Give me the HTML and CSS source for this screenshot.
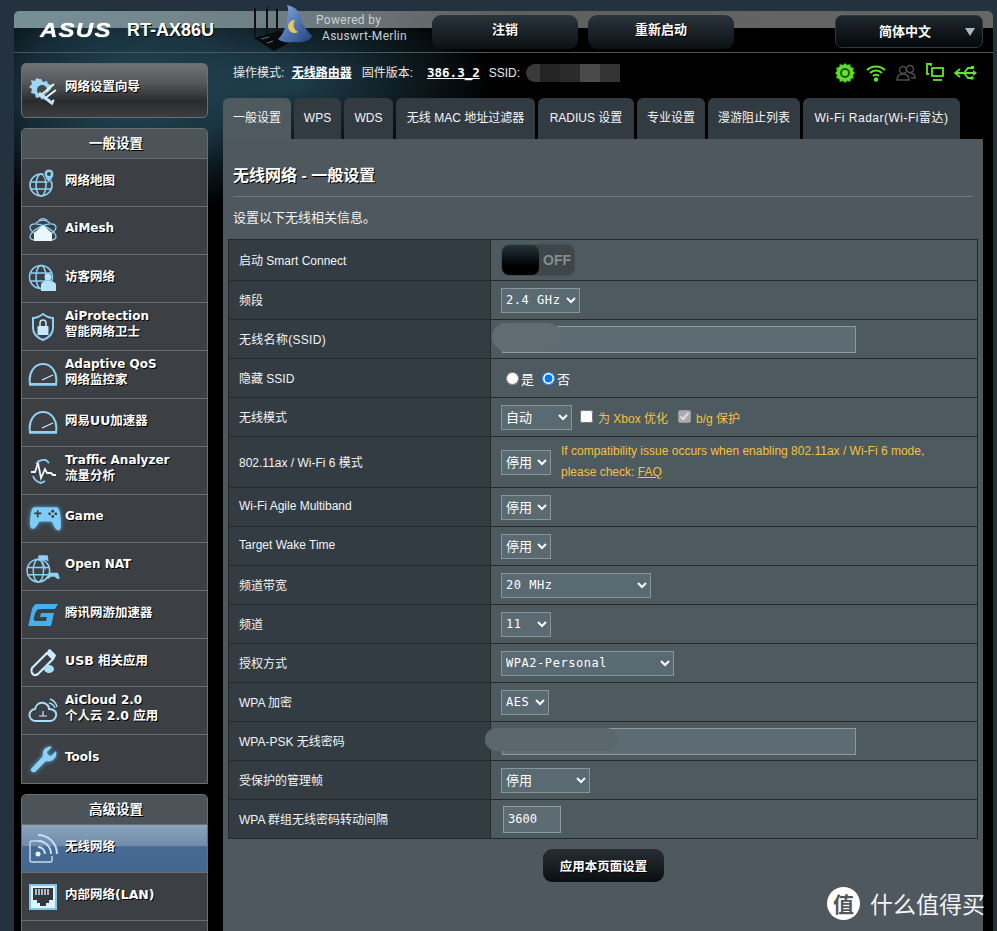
FILE: index.html
```html
<!DOCTYPE html>
<html lang="zh-CN">
<head>
<meta charset="utf-8">
<title>RT-AX86U</title>
<link rel="stylesheet" href="styles.css">
</head>
<body>
<div class="window">
  <svg class="router-logo" width="64" height="46" viewBox="0 0 64 46">
    <defs>
      <linearGradient id="hat" x1="0" y1="0" x2="1" y2="1"><stop offset="0" stop-color="#8aaee0"/><stop offset="1" stop-color="#1f3f7f"/></linearGradient>
    </defs>
    <path d="M2 3v29M14 2v28M24 3v24" stroke="#111" stroke-width="2"/>
    <path d="M1 33l25-7 17 8-22 12z" fill="#0a0a0a"/>
    <path d="M8 34l8-2M14 38l6-2" stroke="#3a7fa8" stroke-width="1"/>
    <path d="M25 34C30 30 33 22 34 14 35 9 36 5 34 0 44 2 47 8 48 14 50 20 54 26 59 31 58 36 48 38 42 37 34 38 28 37 25 34z" fill="url(#hat)"/>
    <path d="M42 15a6.500 6.500 0 1 0 3 12 8 8 0 0 1-3-12z" fill="#e9c75a"/>
  </svg>
  <header class="topbar">
    <div class="brand">
      <span class="asus">ASUS</span>
      <span class="model">RT-AX86U</span>
    </div>
    <div class="powered"><span>Powered by</span><span class="powered-2">Asuswrt-Merlin</span></div>
    <button class="top-btn">注销</button>
    <button class="top-btn">重新启动</button>
    <div class="lang">简体中文<i class="lang-arrow"></i></div>
  </header>

  <div class="shell">
    <aside class="sidebar">
      <a class="wizard">
        <svg class="ico" viewBox="0 0 30 30"><path d="M13 3l2 3 4-1 1 3 4 1-1 4-6 6-3 5-2-3-4 1-1-4-4-1 1-4-3-2 3-3-1-4 4 1 1-3 3 1z" fill="#9fd6f5"/><circle cx="14" cy="14" r="5" fill="#47494b"/><path d="M12 20L26 8M16 23L28 14M24 26l2-2" stroke="#e8f4fb" stroke-width="2" fill="none"/><path d="M11 17l14 11" stroke="#bfe4f8" stroke-width="3"/></svg>
        <span class="label-wiz">网络设置向导</span>
      </a>
      <nav class="group">
        <div class="group-title">一般设置</div>
        <a class="item"><svg class="ico" viewBox="0 0 30 30"><g fill="none" stroke="#8fd0f5" stroke-width="1.6"><circle cx="13" cy="17" r="11"/><ellipse cx="13" cy="17" rx="5" ry="11"/><path d="M2 14h22M2 21h22"/></g><path d="M21 1a5 5 0 0 1 5 5c0 3-5 9-5 9s-5-6-5-9a5 5 0 0 1 5-5z" fill="#8fd0f5" stroke="#3c4044"/><circle cx="21" cy="6" r="2" fill="#3c4044"/></svg><span class="label">网络地图</span></a>
        <a class="item"><svg class="ico" viewBox="0 0 30 30"><g fill="none" stroke="#8fd0f5" stroke-width="1.3"><ellipse cx="15" cy="16" rx="14" ry="6" transform="rotate(25 15 16)"/><ellipse cx="15" cy="16" rx="14" ry="6" transform="rotate(-25 15 16)"/><path d="M8 7a10 10 0 0 1 14 0M11 4a7 7 0 0 1 8 0"/></g><path d="M15 9l9 8v8H6v-8z" fill="#e8f6fd"/></svg><span class="label en">AiMesh</span></a>
        <a class="item"><svg class="ico" viewBox="0 0 30 30"><g fill="none" stroke="#8fd0f5" stroke-width="1.5"><circle cx="13" cy="13" r="11.5"/><ellipse cx="13" cy="13" rx="5" ry="11.5"/><path d="M2 9h22M2 17h22"/></g><circle cx="20" cy="13" r="3.5" fill="#b8e4fb"/><path d="M13 27v-6c0-3 3-4 7-4s8 1 8 4v6z" fill="#b8e4fb"/></svg><span class="label">访客网络</span></a>
        <a class="item"><svg class="ico" viewBox="0 0 30 30"><path d="M15 2c4 3 7 4 10 4v10c0 6-5 10-10 12C10 26 5 22 5 16V6c3 0 6-1 10-4z" fill="none" stroke="#8fd0f5" stroke-width="2"/><rect x="9.500" y="14" width="11" height="9" rx="1" fill="#c5eafc"/><path d="M12 14v-3a3 3 0 0 1 6 0v3" fill="none" stroke="#c5eafc" stroke-width="1.500"/></svg><span class="two"><b class="en">AiProtection</b><b>智能网络卫士</b></span></a>
        <a class="item"><svg class="ico" viewBox="0 0 30 30"><path d="M2 24C0 12 7 4 15 4s15 8 13 20z" fill="none" stroke="#8fd0f5" stroke-width="2"/><path d="M14 20l11-5" stroke="#cfeefd" stroke-width="1.300"/><path d="M1 25h28" stroke="#8fd0f5" stroke-width="1.500"/></svg><span class="two"><b class="en">Adaptive QoS</b><b>网络监控家</b></span></a>
        <a class="item"><svg class="ico" viewBox="0 0 30 30"><path d="M2 24C0 12 7 4 15 4s15 8 13 20z" fill="none" stroke="#8fd0f5" stroke-width="2"/><path d="M14 20l11-5" stroke="#cfeefd" stroke-width="1.300"/><path d="M1 25h28" stroke="#8fd0f5" stroke-width="1.500"/></svg><span class="label">网易UU加速器</span></a>
        <a class="item"><svg class="ico" viewBox="0 0 30 30"><path d="M3 16h4l3-9 3 15 4-9 2 4h4l2 2h3" fill="none" stroke="#eaf7fd" stroke-width="1.800"/><path d="M8 8a11 11 0 0 1 10-4l3 3M5 20a11 11 0 0 0 8 7l4-2" fill="none" stroke="#8fd0f5" stroke-width="1.800"/></svg><span class="two"><b class="en">Traffic Analyzer</b><b>流量分析</b></span></a>
        <a class="item"><svg class="ico ico-game" viewBox="0 0 32 30"><path d="M5 4h22c3 0 4 10 4 17s-3 7-6 3l-3-6H10l-3 5c-3 3-6 3-6-3S2 4 5 4z" fill="#7fcdf7"/><path d="M5 10h7M8.500 7v7" stroke="#3c4044" stroke-width="1.600"/><circle cx="23" cy="8" r="1.400" fill="#3c4044"/><circle cx="23" cy="13" r="1.400" fill="#3c4044"/><circle cx="20" cy="10.500" r="1.400" fill="#3c4044"/><circle cx="26" cy="10.500" r="1.400" fill="#3c4044"/></svg><span class="label en">Game</span></a>
        <a class="item"><svg class="ico ico-lg" viewBox="0 0 34 34"><g fill="none" stroke="#8fd0f5" stroke-width="1.400"><circle cx="12" cy="21" r="11"/><ellipse cx="12" cy="21" rx="5" ry="11"/><path d="M1 18h22M1 25h22"/></g><path d="M12 6h9l1 6-3-1h-4l-3 1zM23 23h8l2 6-3 0-2-2h-4l-2 2h-3z" fill="#8fd0f5"/><path d="M16 12l3 8" stroke="#8fd0f5"/></svg><span class="label en">Open NAT</span></a>
        <a class="item"><svg class="ico" viewBox="0 0 30 30"><path d="M9 4h21l-3 5H12c-3 0-4 2-5 5l-1 3c-1 3 0 4 3 4h9l1-4h-7l1-4h13l-3 13H1c-1 0-1-1 0-3L4 9c1-3 3-5 5-5z" fill="#45b0f0"/></svg><span class="label">腾讯网游加速器</span></a>
        <a class="item"><svg class="ico" viewBox="0 0 30 30"><path d="M4 20L19 5l6 6-15 15c-3 2-5 1-6-1s-1-3 0-5z" fill="none" stroke="#cdeefd" stroke-width="2.200"/><path d="M20 2l2-1 6 6-1 3-2 1-6-6z" fill="#cdeefd"/><ellipse cx="21" cy="21" rx="5" ry="4" fill="#a8def8"/></svg><span class="label">USB 相关应用</span></a>
        <a class="item"><svg class="ico" viewBox="0 0 30 30"><path d="M8 25a6 6 0 0 1-1-12c1-5 5-7 9-6 3 1 5 3 5 6 5 0 8 3 7 7-1 3-3 5-6 5z" fill="none" stroke="#a8def8" stroke-width="2"/><path d="M11 20h8M15 15v5" stroke="#c9ecfd" stroke-width="1.200"/><path d="M21 7a8 8 0 0 1 6 5M22 3a11 11 0 0 1 7 8" fill="none" stroke="#a8def8" stroke-width="1.400"/></svg><span class="two"><b class="en">AiCloud 2.0</b><b>个人云 2.0 应用</b></span></a>
        <a class="item"><svg class="ico ico-glow" viewBox="0 0 30 30"><path d="M3 25L15 12c-1-4 1-8 5-9 2-1 3 0 4 0l-5 5 1 3 3 1 5-5c1 3 0 6-2 8-2 2-5 3-8 2L7 28c-2 1-5-1-4-3z" fill="#8fd0f5"/></svg><span class="label en">Tools</span></a>
      </nav>
      <nav class="group">
        <div class="group-title">高级设置</div>
        <a class="item item-on"><svg class="ico" viewBox="0 0 30 30"><path d="M14 7H4a2 2 0 0 0-2 2v17a2 2 0 0 0 2 2h18a2 2 0 0 0 2-2v-4" fill="none" stroke="#c3dcf2" stroke-width="1.400"/><circle cx="10" cy="20" r="2.500" fill="#eaf4fc"/><g fill="none" stroke="#c3dcf2" stroke-width="2"><path d="M10 13a7 7 0 0 1 7 7"/><path d="M10 7a13 13 0 0 1 13 13"/><path d="M10 1a19 19 0 0 1 19 19"/></g></svg><span class="label">无线网络</span></a>
        <a class="item"><svg class="ico" viewBox="0 0 30 30"><rect x="2" y="3" width="26" height="24" fill="#dff3fd" stroke="#7fc6ee" stroke-width="2"/><path d="M5 6h20v12h-4v3h-3v3h-6v-3H9v-3H5z" fill="#33383c"/><path d="M8 7v6M11 7v6M14 7v6M17 7v6M20 7v6" stroke="#dff3fd" stroke-width="1.400"/></svg><span class="label">内部网络(LAN)</span></a>
        <a class="item"></a>
      </nav>
    </aside>

    <main class="main">
      <div class="status">
        <span class="status-text">操作模式: <u class="status-link">无线路由器</u></span>
        <span class="status-text">固件版本:</span>
        <u class="fw">386.3_2</u>
        <span class="status-text ssid-text">SSID:</span>
        <span class="blur-ssid"><i></i><i></i><i></i><i></i><i></i></span>
        <span class="status-icons">
          <svg width="22" height="22" viewBox="0 0 22 22"><path d="M11 1l2 2 3-1 1 3 3 1-1 3 2 2-2 2 1 3-3 1-1 3-3-1-2 2-2-2-3 1-1-3-3-1 1-3-2-2 2-2-1-3 3-1 1-3 3 1z" fill="#5fdc2c" stroke="#215a12"/><circle cx="11" cy="11" r="5" fill="#1f5a12"/><circle cx="11" cy="11" r="3" fill="#63e230"/></svg>
          <svg width="20" height="18" viewBox="0 0 20 18"><g fill="none" stroke="#63e230" stroke-width="2"><path d="M1 6a13 13 0 0 1 18 0"/><path d="M4 9a8.500 8.500 0 0 1 12 0"/><path d="M7 12a4 4 0 0 1 6 0"/></g><circle cx="10" cy="15.500" r="2.200" fill="#63e230"/></svg>
          <svg width="20" height="18" viewBox="0 0 20 18"><g fill="none" stroke="#4f4f4f" stroke-width="1.500"><circle cx="7" cy="6" r="3.500"/><circle cx="14" cy="5" r="3.500"/><path d="M1 16c0-4 2-6 6-6s6 2 6 6zM14 9c3 0 5 2 5 5h-4"/></g></svg>
          <svg width="18" height="19" viewBox="0 0 18 19"><g fill="none" stroke="#63e230" stroke-width="1.800"><path d="M5 3V1h-4v10h2"/><rect x="6" y="5" width="11" height="8"/><path d="M7 17h9"/></g></svg>
          <svg width="23" height="14" viewBox="0 0 23 14"><path d="M1 7h20M6 3L1 7l5 4M10 7l4-5h3M10 7l4 5h3" fill="none" stroke="#63e230" stroke-width="1.800"/><rect x="17" y="0" width="3" height="3" fill="#63e230"/><circle cx="18" cy="12" r="1.800" fill="#63e230"/><path d="M19 4l4 3-4 3z" fill="#63e230"/></svg>
        </span>
      </div>
      <div class="tabs">
        <a class="tab tab-on">一般设置</a>
        <a class="tab">WPS</a>
        <a class="tab">WDS</a>
        <a class="tab">无线 MAC 地址过滤器</a>
        <a class="tab">RADIUS 设置</a>
        <a class="tab">专业设置</a>
        <a class="tab">漫游阻止列表</a>
        <a class="tab tab-wide">Wi-Fi Radar(Wi-Fi雷达)</a>
      </div>
      <section class="panel">
        <h1 class="panel-title">无线网络 - 一般设置</h1>
        <p class="panel-desc">设置以下无线相关信息。</p>
        <table class="form">
          <tr class="r41"><th>启动 Smart Connect</th><td>
            <span class="switch"><span class="knob"></span><span class="off">OFF</span></span>
          </td></tr>
          <tr><th>频段</th><td><select class="sel mono w79"><option>2.4 GHz</option></select></td></tr>
          <tr><th class="wide">无线名称(SSID)</th><td class="blur-host"><input class="txt w354" type="text"><span class="blur blur-a"></span></td></tr>
          <tr><th>隐藏 SSID</th><td><label class="radio"><input type="radio" name="h">是</label><label class="radio"><input type="radio" name="h" checked>否</label></td></tr>
          <tr><th>无线模式</th><td class="mode-cell"><select class="sel w71"><option>自动</option></select><label class="chk"><input type="checkbox">为 Xbox 优化</label><label class="chk"><input type="checkbox" checked disabled>b/g 保护</label></td></tr>
          <tr class="r51"><th>802.11ax / Wi-Fi 6 模式</th><td class="note-cell"><select class="sel w50"><option>停用</option></select><span class="note">If compatibility issue occurs when enabling 802.11ax / Wi-Fi 6 mode,<br>please check: <u>FAQ</u></span></td></tr>
          <tr><th>Wi-Fi Agile Multiband</th><td><select class="sel w50"><option>停用</option></select></td></tr>
          <tr><th>Target Wake Time</th><td><select class="sel w50"><option>停用</option></select></td></tr>
          <tr><th>频道带宽</th><td><select class="sel mono w150"><option>20 MHz</option></select></td></tr>
          <tr><th>频道</th><td><select class="sel mono w50"><option>11</option></select></td></tr>
          <tr><th>授权方式</th><td><select class="sel mono w173"><option>WPA2-Personal</option></select></td></tr>
          <tr><th>WPA 加密</th><td><select class="sel mono w48"><option>AES</option></select></td></tr>
          <tr><th>WPA-PSK 无线密码</th><td class="blur-host"><input class="txt w354" type="text"><span class="blur blur-b"></span></td></tr>
          <tr><th>受保护的管理帧</th><td><select class="sel w89"><option>停用</option></select></td></tr>
          <tr><th>WPA 群组无线密码转动间隔</th><td><input class="txt w58 mono" type="text" value="3600"></td></tr>
        </table>
        <div class="apply-row"><button class="apply">应用本页面设置</button></div>
      </section>
    </main>
  </div>
</div>
<div class="watermark"><span class="wm-badge">值</span><span class="wm-text">什么值得买</span></div>
</body>
</html>
```
FILE: styles.css
```css
* { box-sizing: border-box; }
html, body { margin: 0; height: 931px; overflow: hidden; }
body {
  background: #24323f;
  font-family: "Liberation Sans", "Noto Sans CJK SC", sans-serif;
  font-size: 12px;
  color: #fff;
}
.window {
  position: relative;
  margin: 11px 4px 0 14px;
  height: 920px;
  border-radius: 5px 5px 0 0;
  background:
    radial-gradient(ellipse 190px 130px at 110px 80px, #24485a 0%, rgba(36,72,90,.6) 55%, rgba(36,72,90,0) 100%),
    radial-gradient(ellipse 200px 90px at 280px 70px, #1f3e4c 0%, rgba(31,62,76,0) 100%),
    #000;
}
.router-logo { position: absolute; left: 239px; top: -6px; }

/* top bar */
.topbar {
  height: 42px;
  display: flex;
  align-items: flex-start;
  padding-top: 4px;
  border-bottom: 1px solid #4c5660;
  background: linear-gradient(90deg, rgba(124,150,156,.95) 0, rgba(120,135,140,.9) 30%, #5f5f5f 50%, #666 100%) top / 100% 17px no-repeat;
  border-radius: 5px 5px 0 0;
}
.brand { width: 302px; display: flex; align-items: center; padding: 3px 0 0 26px; height: 26px; }
.asus {
  display: inline-block;
  width: 71px;
  font: italic bold 21px/20px "Liberation Sans", sans-serif;
  letter-spacing: 1px;
  transform: scaleX(1.15);
  transform-origin: left;
  text-shadow: 0 0 1px #fff;
}
.model {
  margin-left: 16px;
  font: bold 18px/20px "Liberation Sans", sans-serif;
  text-shadow: 1px 1px 0 #000;
}
.powered {
  width: 116px;
  display: flex;
  flex-direction: column;
  margin-top: -3px;
  font: 12px/16px Roboto, sans-serif;
  color: #c9cfd2;
  letter-spacing: .3px;
}
.powered-2 { margin-left: 6px; }
.top-btn {
  width: 146px;
  height: 34px;
  margin-right: 10px;
  border: 0;
  border-radius: 9px;
  background: linear-gradient(#2a353c, #0c1013);
  color: #fff;
  font: bold 13px/28px "Liberation Sans", "Noto Sans CJK SC", sans-serif;
  padding: 0 0 4px;
  text-shadow: 1px 1px 0 #000;
}
.lang {
  position: relative;
  margin-left: 91px;
  width: 148px;
  height: 33px;
  border: 1px solid #2f3a40;
  border-radius: 7px;
  background: linear-gradient(#1f292f, #04070a);
  font: bold 13px/31px "Liberation Sans", "Noto Sans CJK SC", sans-serif;
  text-align: center;
  padding-right: 8px;
}
.lang-arrow {
  position: absolute;
  right: 7px;
  top: 12px;
  border: 5.500px solid transparent;
  border-top: 8px solid #a9b8c9;
  border-bottom: 0;
}

/* layout */
.shell { display: flex; gap: 15px; padding-left: 7px; }
.sidebar { width: 187px; flex: none; padding-top: 10px; display: flex; flex-direction: column; gap: 10px; }
.main { width: 760px; flex: none; }

/* side */
.wizard {
  height: 55px;
  display: flex;
  align-items: center;
  border: 1px solid #6a6e71;
  border-radius: 5px;
  background: linear-gradient(#707375 0, #55585a 35%, #2a2b2c 70%, #3c3d3e 100%);
}
.group {
  border: 1px solid #6a6e71;
  border-radius: 5px 5px 0 0;
  background: #3c4044;
}
.group-title {
  height: 30px;
  padding-left: 3px;
  background: #4c5459;
  border-bottom: 1px solid #6a6e71;
  border-radius: 4px 4px 0 0;
  text-align: center;
  font: bold 13.500px/30px "Liberation Sans", "Noto Sans CJK SC", sans-serif;
  text-shadow: 1px 1px 0 #000;
}
.item {
  height: 48px;
  display: flex;
  align-items: center;
  border-bottom: 1px solid #6a6e71;
}
.item:last-child { border-bottom: 0; }
.label, .label-wiz, .two {
  font: bold 12.500px/15px "DejaVu Sans", "Noto Sans CJK SC", sans-serif;
  text-shadow: 1px 1px 0 #000;
}
.label { margin-bottom: 4px; }
.label-wiz { margin-bottom: 8px; }
.two { display: flex; flex-direction: column; margin-bottom: 6px; }
.two b { font-weight: bold; }
.en { font-size: 12px; }
.ico { width: 30px; height: 30px; flex: none; margin: 0 7px 0 6px; }
.ico-lg { width: 35px; height: 35px; margin: 0 4px; }
.ico-game { width: 33px; height: 31px; margin: 0 3px 0 7px; filter: drop-shadow(0 0 2px #4fa8dc); }
.ico-glow { filter: drop-shadow(0 0 2px #4fa8dc); }
.item-on { background: linear-gradient(#8ba4bd 0, #6f8cab 44%, #476a94 46%, #44678f 100%); }

/* status */
.status { height: 45px; padding: 11px 0 0 10px; display: flex; align-items: flex-start; position: relative; }
.status-text { font-size: 12px; line-height: 18px; color: #e8e8e8; margin-right: 10px; }
.status-link { color: #fff; font-weight: bold; margin-left: 4px; }
.fw { font: bold 12.500px/18px "DejaVu Sans Mono", monospace; margin: 0 9px 0 4px; }
.ssid-text { margin-right: 6px; }
.blur-ssid { display: flex; height: 18px; }
.blur-ssid i { width: 20px; background: #2b2b2b; }
.blur-ssid i:first-child { width: 14px; border-radius: 9px 0 0 9px; background: #3a3a3a; }
.blur-ssid i:nth-child(2) { background: #242424; }
.blur-ssid i:nth-child(4) { background: #4a4a4a; }
.blur-ssid i:nth-child(5) { background: #333; }
.status-icons {
  position: absolute;
  left: 611px;
  top: 0;
  height: 35px;
  display: flex;
  align-items: center;
  gap: 10px;
  padding-top: 4px;
}

/* tabs */
.tabs {
  display: grid;
  grid-template-columns: 68px 47px 49px 139px 96px 68px 92px 157px;
  gap: 3px;
  height: 41px;
}
.tab {
  background: #333b42;
  border-radius: 6px 6px 0 0;
  font-size: 12px;
  line-height: 41px;
  text-align: center;
  color: #f4f6f8;
}
.tab-on { background: #4e5a60; }
.tab-wide { letter-spacing: .5px; }

/* panel */
.panel { height: 800px; background: #4e585e; padding-top: 24px; }
.panel-title {
  margin: 0 10px;
  height: 34px;
  font: bold 16px/26px "Liberation Sans", "Noto Sans CJK SC", sans-serif;
  border-bottom: 1px solid #6f7a80;
  text-shadow: 1px 1px 0 #000;
}
.panel-desc { margin: 0 10px; height: 42px; font-size: 13px; line-height: 42px; color: #f2f2f2; }

/* table */
.form { margin-left: 5px; width: 750px; border-collapse: collapse; table-layout: fixed; background: #4d5a60; }
.form th, .form td { border: 1px solid #24292d; height: 39px; padding: 0; vertical-align: middle; }
.form th {
  width: 262px;
  padding: 0 0 2px 10px;
  background: #333c43;
  font-weight: normal;
  font-size: 12px;
  text-align: left;
  color: #f2f4f6;
}
.form th.wide { letter-spacing: .3px; }
.form td { padding-left: 10px; }
.form .r41 th, .form .r41 td { height: 41px; }
.form .r51 th, .form .r51 td { height: 51px; }

.sel {
  height: 25px;
  background: #596a72;
  color: #fff;
  border: 1px solid #8a949a;
  border-radius: 0;
  padding: 0;
  font: 13px "Liberation Sans", "Noto Sans CJK SC", sans-serif;
  vertical-align: middle;
}
.mono { font-family: "DejaVu Sans Mono", "Liberation Mono", monospace; font-size: 12px; }
.sel.mono { letter-spacing: .55px; }
.w48 { width: 48px; }
.w50 { width: 50px; }
.w71 { width: 71px; }
.w79 { width: 79px; }
.w89 { width: 89px; }
.w150 { width: 150px; }
.w173 { width: 173px; }

.txt {
  height: 27px;
  margin-left: 1px;
  background: #5d6c73;
  border: 1px solid #8f999e;
  color: #fff;
  padding: 0 4px;
  vertical-align: middle;
  outline: 0;
}
.w354 { width: 354px; }
.w58 { width: 58px; margin-left: 2px; }

.switch {
  display: flex;
  width: 74px;
  height: 32px;
  border: 1px solid #434c50;
  border-radius: 8px;
  background: #3e4649;
  overflow: hidden;
}
.knob { width: 37px; background: linear-gradient(#24343a, #000 70%); border-radius: 7px; }
.off { font: bold 14px/30px "Liberation Sans", sans-serif; color: #868c8f; padding-left: 4px; }

.radio { margin-left: 3px; margin-right: 3px; font-size: 13px; display: inline-flex; align-items: center; }
.radio input { margin: 0 2px 0 2px; width: 13px; height: 13px; }

.mode-cell { white-space: nowrap; }
.chk { margin-left: 8px; color: #f5c23e; font-size: 12px; display: inline-flex; align-items: center; vertical-align: middle; }
.chk + .chk { margin-left: 10px; }
.chk input { width: 13px; height: 13px; margin: 0 5px 2px 0; }

.note-cell { white-space: nowrap; }
.note { display: inline-block; margin-left: 10px; font-size: 12px; line-height: 21px; color: #f5c23e; vertical-align: middle; }

.blur-host { position: relative; }
.blur { position: absolute; display: block; }
.blur-a { left: 1px; top: 3px; width: 70px; height: 28px; border-radius: 14px; background: #5f6c72; }
.blur-b { left: -6px; top: 6px; width: 133px; height: 23px; border-radius: 12px; background: #5a676d; }

.apply-row { display: flex; justify-content: center; padding: 10px 0 0 1px; }
.apply {
  width: 121px;
  height: 33px;
  border: 0;
  border-radius: 9px;
  background: linear-gradient(#262e33, #0b0e10);
  color: #fff;
  font: bold 12.500px "Liberation Sans", "Noto Sans CJK SC", sans-serif;
  text-shadow: 1px 1px 0 #000;
}

/* watermark */
.watermark {
  position: absolute;
  left: 827px;
  top: 887px;
  display: flex;
  align-items: center;
  gap: 10px;
}
.wm-badge {
  width: 33px;
  height: 33px;
  border-radius: 50%;
  background: #fff;
  color: #4e585e;
  font: bold 21px/33px "Noto Sans CJK SC", sans-serif;
  text-align: center;
}
.wm-text { font: 23px/33px "Noto Sans CJK SC", sans-serif; color: #f4f4f4; }
```
